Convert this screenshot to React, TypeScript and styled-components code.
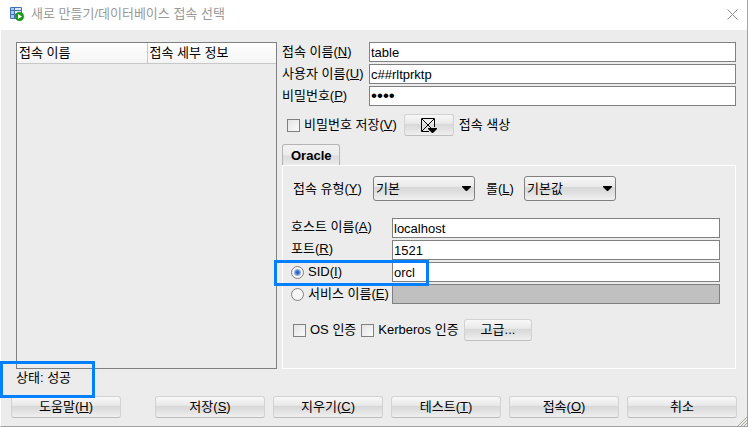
import React, { useState } from "react";
import styled, { createGlobalStyle, css } from "styled-components";

const GlobalStyle = createGlobalStyle`
  *, *::before, *::after { box-sizing: border-box; }
  body { margin: 0; background: #ececec; }
  body, button, input, select {
    font-family: "Liberation Sans", "Noto Sans CJK KR", sans-serif;
    font-size: 13px;
    line-height: 18px;
    color: #000;
  }
`;

const glossy = css`
  background: linear-gradient(#f8f8f8 0%, #e9e9e9 42%, #d8d8d8 46%, #dfdfdf 65%, #f0f0f0 100%);
`;

const Dialog = styled.div`
  display: flex;
  flex-direction: column;
  min-height: 100vh;
  border-left: 1px solid #fff;
  border-right: 1px solid #a3a3a3;
  border-bottom: 1px solid #a3a3a3;
  background: #ececec;
`;

const TitleBar = styled.header`
  display: flex;
  align-items: center;
  gap: 6px;
  height: 30px;
  padding: 0 9px 2px 8px;
  background: #fff;
`;

const Title = styled.h1`
  flex: 1;
  margin: 0;
  font-size: 13px;
  font-weight: 400;
  color: #999;
`;

const CloseButton = styled.button`
  display: flex;
  padding: 0;
  border: 0;
  background: none;
`;

const Main = styled.main`
  flex: 1;
  display: grid;
  grid-template-columns: 261px minmax(0, 1fr);
  gap: 5px;
  padding: 12px 11px 0 15px;
`;

const ListFrame = styled.section`
  border: 1px solid #808080;
`;

const ConnectionTable = styled.table`
  width: 100%;
  border-spacing: 0;
  table-layout: fixed;
`;

const HeadCell = styled.th`
  height: 21px;
  padding: 0 2px;
  border-bottom: 1px solid #c8c8c8;
  background: linear-gradient(#fff, #f4f4f4);
  font-weight: 400;
  line-height: 18px;
  text-align: left;

  & + & { border-left: 1px solid #c8c8c8; }
`;

const Details = styled.form`
  display: flex;
  flex-direction: column;
`;

const FieldList = styled.div`
  display: flex;
  flex-direction: column;
  gap: 2px;
`;

const AccountFields = styled(FieldList)`
  line-height: 20px;
`;

const FieldRow = styled.div<{ $label: number }>`
  position: relative;
  display: grid;
  grid-template-columns: ${(p) => p.$label}px minmax(0, 1fr);
  grid-template-rows: 20px;
  align-items: start;
  white-space: nowrap;
`;

const TextBox = styled.input`
  width: 100%;
  height: 20px;
  padding: 0 1px;
  border: 1px solid #808080;
  border-radius: 0;
  background: #fff;
  outline: none;

  &:disabled { background: #c0c0c0; }
  &[type="password"] { font-size: 17px; }
`;

const OptionRow = styled.div`
  display: flex;
  align-items: center;
  white-space: nowrap;
`;

const SaveRow = styled(OptionRow)`
  margin-top: 8px;
  padding-left: 5px;
  gap: 5px;
`;

const AuthRow = styled(OptionRow)`
  margin-top: 15px;
  padding-left: 2px;
  gap: 5px;
`;

const Choice = styled.label`
  display: flex;
  align-items: center;
  gap: 4px;
  height: 20px;
`;

const CheckBox = styled.input.attrs({ type: "checkbox" })`
  appearance: none;
  width: 13px;
  height: 13px;
  margin: 0;
  border: 1px solid #808080;
  background: linear-gradient(135deg, #e4e4e4, #fafafa);

  &:checked { background: #3d6fc4; }
`;

const Radio = styled.input.attrs({ type: "radio" })`
  appearance: none;
  width: 13px;
  height: 13px;
  margin: 0;
  border: 1px solid #808080;
  border-radius: 50%;
  background: #f6f6f6;

  &:checked { background: radial-gradient(circle, #2f62c0 0 1px, #8eaee4 3px, #f6f6f6 4px); }
`;

const PushButton = styled.button`
  ${glossy}
  height: 22px;
  padding: 0 16px;
  border: 1px solid #d2d2d2;
  border-bottom-color: #bdbdbd;
  border-radius: 3px;
  line-height: 18px;
`;

const ColorButton = styled(PushButton)`
  display: flex;
  align-items: center;
  justify-content: center;
  width: 50px;
  padding: 0;
  margin-left: 2px;
`;

const TabList = styled.div`
  display: flex;
  margin-top: 8px;
`;

const Tab = styled.button`
  height: 22px;
  margin-bottom: -1px;
  padding: 0 8px;
  border: 1px solid #b4b4b4;
  border-bottom: 0;
  border-radius: 3px 3px 0 0;
  background: linear-gradient(#f2f2f2 0%, #ececec 48%, #dcdcdc 52%, #ececec 100%);
  font-weight: 700;
`;

const TabPanel = styled.div`
  flex: 1;
  padding: 10px 15px 20px 8px;
  border: 1px solid #fff;
`;

const TypeRow = styled(OptionRow)`
  margin-bottom: 17px;
  padding-left: 2px;
`;

const SelectLabel = styled.label<{ $width: number }>`
  width: ${(p) => p.$width}px;
`;

const SelectFrame = styled.div<{ $width: number }>`
  ${glossy}
  display: grid;
  align-items: center;
  width: ${(p) => p.$width}px;
  height: 25px;
  margin-right: 11px;
  border: 1px solid #808080;
  border-radius: 3px;

  > * { grid-area: 1 / 1; }
  > svg { justify-self: end; margin-right: 3px; pointer-events: none; }
`;

const Select = styled.select`
  appearance: none;
  width: 100%;
  height: 23px;
  padding: 0 2px;
  border: 0;
  background: none;
  outline: none;
`;

const Status = styled.div`
  position: relative;
  height: 27px;
  padding-left: 15px;
`;

const StatusHighlight = styled.div`
  position: absolute;
  z-index: 1;
  inset: -8px auto auto -1px;
  width: 95px;
  height: 37px;
  border: 3px solid #0080ff;
  pointer-events: none;
`;

const SidHighlight = styled(StatusHighlight)`
  inset: -2px auto auto -17px;
  width: 155px;
  height: 26px;
`;

const Footer = styled.footer`
  display: flex;
  gap: 8px;
  padding: 0 10px 8px;

  > button { flex: 1; padding: 0; }
  > button:first-child { margin-right: 26px; }
`;

const SizeGrip = styled.svg`
  position: absolute;
  right: 1px;
  bottom: 1px;
`;

const Page = styled.div`
  position: relative;
`;

function Mnemonic({ text, letter }: { text: string; letter: string }) {
  return <>{text}(<u>{letter}</u>)</>;
}

function AppIcon() {
  return (
    <svg width="16" height="16" viewBox="0 0 16 16" aria-hidden="true">
      <rect x="1" y="1" width="12" height="12" rx="1" fill="#4472b4" />
      <path d="M2 2h3v2H2zM2 5h3v3H2zM2 9h3v3H2z" fill="#a9c8ee" />
      <path d="M6 2h6v2H6zM6 5h6v3H6zM6 9h6v3H6z" fill="#dce8f7" />
      <circle cx="10.5" cy="10.5" r="4.5" fill="#169b14" />
      <path d="M9 8v5l4-2.5z" fill="#fff" />
    </svg>
  );
}

function DropArrow() {
  return (
    <svg width="9" height="5" viewBox="0 0 9 5" aria-hidden="true">
      <path d="M0 0h9v1L5 5H4L0 1z" fill="#000" />
    </svg>
  );
}

export default function App() {
  const [target, setTarget] = useState("sid");
  return (
    <Page>
      <GlobalStyle />
      <Dialog role="dialog" aria-labelledby="title">
        <TitleBar>
          <AppIcon />
          <Title id="title">새로 만들기/데이터베이스 접속 선택</Title>
          <CloseButton aria-label="닫기">
            <svg width="11" height="11" viewBox="0 0 11 11">
              <path d="M.5.5l10 10M10.5.5l-10 10" stroke="#8c8c8c" fill="none" />
            </svg>
          </CloseButton>
        </TitleBar>
        <Main>
          <ListFrame>
            <ConnectionTable>
              <thead>
                <tr>
                  <HeadCell>접속 이름</HeadCell>
                  <HeadCell>접속 세부 정보</HeadCell>
                </tr>
              </thead>
            </ConnectionTable>
          </ListFrame>
          <Details>
            <AccountFields>
              <FieldRow $label={87}>
                <label htmlFor="name"><Mnemonic text="접속 이름" letter="N" /></label>
                <TextBox id="name" defaultValue="table" />
              </FieldRow>
              <FieldRow $label={87}>
                <label htmlFor="user"><Mnemonic text="사용자 이름" letter="U" /></label>
                <TextBox id="user" defaultValue="c##rltprktp" />
              </FieldRow>
              <FieldRow $label={87}>
                <label htmlFor="password"><Mnemonic text="비밀번호" letter="P" /></label>
                <TextBox id="password" type="password" defaultValue="0000" />
              </FieldRow>
            </AccountFields>
            <SaveRow>
              <Choice><CheckBox /><span><Mnemonic text="비밀번호 저장" letter="V" /></span></Choice>
              <ColorButton type="button" id="color">
                <svg width="16" height="15" viewBox="0 0 16 15" aria-hidden="true">
                  <path d="M13.5 9V.5H.5v13H8" fill="none" stroke="#000" />
                  <path d="M1 1l9 9M13 1L1 13" fill="none" stroke="#000" />
                  <path d="M7 10h9v1l-4 4h-1l-4-4z" fill="#000" />
                </svg>
              </ColorButton>
              <label htmlFor="color">접속 색상</label>
            </SaveRow>
            <TabList role="tablist">
              <Tab type="button" role="tab" aria-selected="true">Oracle</Tab>
            </TabList>
            <TabPanel role="tabpanel">
              <TypeRow>
                <SelectLabel $width={80} htmlFor="type"><Mnemonic text="접속 유형" letter="Y" /></SelectLabel>
                <SelectFrame $width={102}>
                  <Select id="type"><option>기본</option></Select>
                  <DropArrow />
                </SelectFrame>
                <SelectLabel $width={38} htmlFor="role"><Mnemonic text="롤" letter="L" /></SelectLabel>
                <SelectFrame $width={92}>
                  <Select id="role"><option>기본값</option></Select>
                  <DropArrow />
                </SelectFrame>
              </TypeRow>
              <FieldList>
                <FieldRow $label={101}>
                  <label htmlFor="host"><Mnemonic text="호스트 이름" letter="A" /></label>
                  <TextBox id="host" defaultValue="localhost" />
                </FieldRow>
                <FieldRow $label={101}>
                  <label htmlFor="port"><Mnemonic text="포트" letter="R" /></label>
                  <TextBox id="port" defaultValue="1521" />
                </FieldRow>
                <FieldRow $label={101}>
                  <Choice>
                    <Radio name="target" checked={target === "sid"} onChange={() => setTarget("sid")} />
                    <span><Mnemonic text="SID" letter="I" /></span>
                  </Choice>
                  <TextBox aria-label="SID" defaultValue="orcl" disabled={target !== "sid"} />
                  <SidHighlight />
                </FieldRow>
                <FieldRow $label={101}>
                  <Choice>
                    <Radio name="target" checked={target === "service"} onChange={() => setTarget("service")} />
                    <span><Mnemonic text="서비스 이름" letter="E" /></span>
                  </Choice>
                  <TextBox aria-label="서비스 이름" disabled={target !== "service"} />
                </FieldRow>
              </FieldList>
              <AuthRow>
                <Choice><CheckBox /><span>OS 인증</span></Choice>
                <Choice><CheckBox /><span>Kerberos 인증</span></Choice>
                <PushButton type="button">고급...</PushButton>
              </AuthRow>
            </TabPanel>
          </Details>
        </Main>
        <Status role="status">
          상태: 성공
          <StatusHighlight />
        </Status>
        <Footer>
          <PushButton><Mnemonic text="도움말" letter="H" /></PushButton>
          <PushButton><Mnemonic text="저장" letter="S" /></PushButton>
          <PushButton><Mnemonic text="지우기" letter="C" /></PushButton>
          <PushButton><Mnemonic text="테스트" letter="T" /></PushButton>
          <PushButton><Mnemonic text="접속" letter="O" /></PushButton>
          <PushButton>취소</PushButton>
        </Footer>
      </Dialog>
      <SizeGrip width="9" height="9" viewBox="0 0 9 9" aria-hidden="true">
        <path d="M0 9L9 0M3 9L9 3M6 9L9 6" stroke="#aaa99a" />
      </SizeGrip>
    </Page>
  );
}
